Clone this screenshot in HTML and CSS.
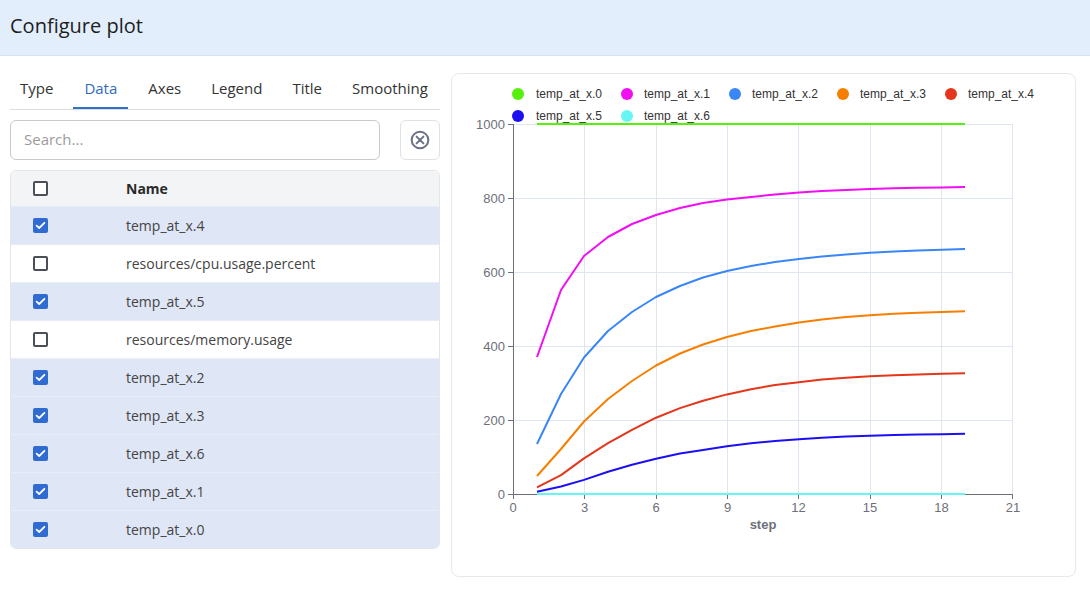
FILE: index.html
```html
<!DOCTYPE html>
<html>
<head>
<meta charset="utf-8">
<link rel="stylesheet" href="styles.css">
</head>
<body>
<header class="topbar"><h1 class="title">Configure plot</h1></header>
<main class="layout">
  <section class="panel">
    <nav class="tabs">
      <span class="tab">Type</span>
      <span class="tab active">Data</span>
      <span class="tab">Axes</span>
      <span class="tab">Legend</span>
      <span class="tab">Title</span>
      <span class="tab">Smoothing</span>
    </nav>
    <div class="search-row">
      <input class="search" type="text" placeholder="Search...">
      <button class="clear-btn" type="button">
        <svg width="22" height="22" viewBox="0 0 22 22"><circle cx="11" cy="11" r="8.3" fill="none" stroke="#6b7086" stroke-width="2"/><path d="M7.6 7.6 L14.4 14.4 M14.4 7.6 L7.6 14.4" stroke="#6b7086" stroke-width="2" stroke-linecap="round"/></svg>
      </button>
    </div>
    <div class="table">
      <div class="row head"><div class="cell-check"><span class="cb"></span></div><div class="cell-name">Name</div></div>
      <div class="row sel"><div class="cell-check"><span class="cb on"><svg viewBox="0 0 15 15"><path d="M3.6 7.6 L6.2 10 L11.4 4.8" fill="none" stroke="#fff" stroke-width="1.8" stroke-linecap="round" stroke-linejoin="round"/></svg></span></div><div class="cell-name">temp_at_x.4</div></div>
      <div class="row"><div class="cell-check"><span class="cb"></span></div><div class="cell-name">resources/cpu.usage.percent</div></div>
      <div class="row sel"><div class="cell-check"><span class="cb on"><svg viewBox="0 0 15 15"><path d="M3.6 7.6 L6.2 10 L11.4 4.8" fill="none" stroke="#fff" stroke-width="1.8" stroke-linecap="round" stroke-linejoin="round"/></svg></span></div><div class="cell-name">temp_at_x.5</div></div>
      <div class="row"><div class="cell-check"><span class="cb"></span></div><div class="cell-name">resources/memory.usage</div></div>
      <div class="row sel"><div class="cell-check"><span class="cb on"><svg viewBox="0 0 15 15"><path d="M3.6 7.6 L6.2 10 L11.4 4.8" fill="none" stroke="#fff" stroke-width="1.8" stroke-linecap="round" stroke-linejoin="round"/></svg></span></div><div class="cell-name">temp_at_x.2</div></div>
      <div class="row sel"><div class="cell-check"><span class="cb on"><svg viewBox="0 0 15 15"><path d="M3.6 7.6 L6.2 10 L11.4 4.8" fill="none" stroke="#fff" stroke-width="1.8" stroke-linecap="round" stroke-linejoin="round"/></svg></span></div><div class="cell-name">temp_at_x.3</div></div>
      <div class="row sel"><div class="cell-check"><span class="cb on"><svg viewBox="0 0 15 15"><path d="M3.6 7.6 L6.2 10 L11.4 4.8" fill="none" stroke="#fff" stroke-width="1.8" stroke-linecap="round" stroke-linejoin="round"/></svg></span></div><div class="cell-name">temp_at_x.6</div></div>
      <div class="row sel"><div class="cell-check"><span class="cb on"><svg viewBox="0 0 15 15"><path d="M3.6 7.6 L6.2 10 L11.4 4.8" fill="none" stroke="#fff" stroke-width="1.8" stroke-linecap="round" stroke-linejoin="round"/></svg></span></div><div class="cell-name">temp_at_x.1</div></div>
      <div class="row sel"><div class="cell-check"><span class="cb on"><svg viewBox="0 0 15 15"><path d="M3.6 7.6 L6.2 10 L11.4 4.8" fill="none" stroke="#fff" stroke-width="1.8" stroke-linecap="round" stroke-linejoin="round"/></svg></span></div><div class="cell-name">temp_at_x.0</div></div>
    </div>
  </section>
  <section class="chart-card">
    <svg class="chart" width="623" height="502" viewBox="452 74 623 502">
      <g class="legend">
        <circle cx="518" cy="94" r="6" fill="#55f00c"/><text x="536" y="98">temp_at_x.0</text>
        <circle cx="627" cy="94" r="6" fill="#f00ff0"/><text x="644" y="98">temp_at_x.1</text>
        <circle cx="735" cy="94" r="6" fill="#3a86f5"/><text x="752" y="98">temp_at_x.2</text>
        <circle cx="843" cy="94" r="6" fill="#f77f00"/><text x="860" y="98">temp_at_x.3</text>
        <circle cx="951" cy="94" r="6" fill="#e3361a"/><text x="968" y="98">temp_at_x.4</text>
        <circle cx="518" cy="116" r="6" fill="#1c10f2"/><text x="536" y="120">temp_at_x.5</text>
        <circle cx="627" cy="116" r="6" fill="#66f6f6"/><text x="644" y="120">temp_at_x.6</text>
      </g>
      <g class="grid" stroke="#e0e6f1" stroke-width="1">
        <path d="M513 124.5 H1013 M513 198.5 H1013 M513 272.5 H1013 M513 346.5 H1013 M513 420.5 H1013"/>
        <path d="M584.5 124 V494 M656.5 124 V494 M727.5 124 V494 M798.5 124 V494 M870.5 124 V494 M941.5 124 V494 M1012.5 124 V494"/>
      </g>
      <g class="axes" stroke="#6e7079" stroke-width="1">
        <path d="M513.5 124 V494.5 M513 494.5 H1013"/>
        <path d="M508 124.5 H513 M508 198.5 H513 M508 272.5 H513 M508 346.5 H513 M508 420.5 H513 M508 494.5 H513"/>
        <path d="M513.5 494 V499 M584.5 494 V499 M656.5 494 V499 M727.5 494 V499 M798.5 494 V499 M870.5 494 V499 M941.5 494 V499 M1012.5 494 V499"/>
      </g>
      <g class="ylabels">
        <text x="505" y="129">1000</text>
        <text x="505" y="203">800</text>
        <text x="505" y="277">600</text>
        <text x="505" y="351">400</text>
        <text x="505" y="425">200</text>
        <text x="505" y="499">0</text>
      </g>
      <g class="xlabels">
        <text x="513" y="512">0</text>
        <text x="584.5" y="512">3</text>
        <text x="656" y="512">6</text>
        <text x="727.5" y="512">9</text>
        <text x="798.5" y="512">12</text>
        <text x="870" y="512">15</text>
        <text x="941.5" y="512">18</text>
        <text x="1013" y="512">21</text>
      </g>
      <text class="xname" x="763" y="529">step</text>
      <g class="series" fill="none" stroke-width="2" stroke-linejoin="round">
        <path d="M537 124 H965" stroke="#55f00c"/>
        <polyline stroke="#f00ff0" points="537,357 561,290 584,256 608,237 632,224 656,215 680,208 703,203 727,199.5 751,197 775,194.5 799,192.5 822,191 846,190 870,189 894,188.3 918,187.8 942,187.4 965,187"/>
        <polyline stroke="#3a86f5" points="537,444 561,394 584,357.5 608,331 632,312 656,297 680,286 703,277.5 727,271 751,266 775,262 799,259 822,256.5 846,254.5 870,252.8 894,251.5 918,250.5 942,249.7 965,249"/>
        <polyline stroke="#f77f00" points="537,476 561,449 584,421.5 608,399 632,381 656,365.5 680,353.5 703,344.5 727,337 751,331 775,326.5 799,322.5 822,319.5 846,317 870,315.2 894,313.8 918,312.8 942,312 965,311.3"/>
        <polyline stroke="#e3361a" points="537,487.3 561,475.1 584,458.4 608,443.2 632,429.9 656,417.7 680,408.1 703,400.7 727,394.4 751,389.2 775,385.1 799,382.2 822,379.6 846,377.7 870,376.3 894,375.2 918,374.4 942,373.7 965,373.3"/>
        <polyline stroke="#1c10f2" points="537,491.7 561,486.5 584,479.9 608,471.7 632,464.7 656,458.8 680,453.6 703,449.9 727,446.2 751,443.2 775,441 799,439.2 822,437.7 846,436.6 870,435.8 894,435.1 918,434.5 942,434.2 965,433.8"/>
        <path d="M537 494 H965" stroke="#66f6f6"/>
      </g>
    </svg>
  </section>
</main>
</body>
</html>
```
FILE: styles.css
```css
* { box-sizing: border-box; }
html, body { margin: 0; padding: 0; background: #fff; }
body { font-family: "Open Sans", "Noto Sans", sans-serif; color: #333; width: 1090px; height: 591px; overflow: hidden; }

.topbar {
  height: 56px;
  background: #e2eefb;
  border-bottom: 1px solid #d6e2ef;
  display: flex;
  align-items: center;
  padding: 0 10px 4px;
}
.title { margin: 0; font-size: 20px; font-weight: 400; color: #1d1d1d; }

.layout { display: flex; gap: 11px; padding: 17px 0 0 10px; }

.panel { width: 430px; display: flex; flex-direction: column; }

.tabs { display: flex; gap: 10px; border-bottom: 1px solid #dcdcdc; }
.tab {
  font-size: 15px; line-height: 20px; color: #333;
  padding: 5px 10px 9px;
  border-bottom: 2px solid transparent;
}
.tab.active { color: #2f6bc4; border-bottom-color: #3370cc; font-weight: 500; padding: 5px 11px 9px; }

.search-row { display: flex; gap: 20px; margin-top: 10px; }
.search {
  width: 370px; height: 40px;
  border: 1px solid #c9c9c9; border-radius: 6px;
  padding: 0 13px 2px;
  font: 15px "Open Sans", sans-serif; color: #333;
  outline: none;
}
.search::placeholder { color: #9b9b9b; }
.clear-btn {
  width: 40px; height: 40px; padding: 0;
  border: 1px solid #dfe1e5; border-radius: 6px; background: #fff;
  display: flex; align-items: center; justify-content: center;
}
.clear-btn svg { display: block; }

.table {
  margin-top: 10px;
  border: 1px solid #e2e5ea; border-radius: 6px; overflow: hidden;
}
.row {
  display: flex; align-items: center; height: 38px;
  border-top: 1px solid #e8ebf2;
  font-size: 14px; color: #444;
  background: #fff;
}
.row.head { height: 35px; border-top: none; background: #f3f4f6; font-weight: 700; color: #2a2a2a; padding-bottom: 1px; }
.row.sel { background: #dfe6f5; border-top-color: #e8edf8; }
.cell-check { width: 115px; padding-left: 22px; display: flex; align-items: center; }
.cell-name { flex: 1; }

.cb {
  width: 15px; height: 15px; border: 2px solid #4b5058; border-radius: 2px;
  display: block; background: #fff;
}
.cb.on { border: none; background: #2f6bd0; border-radius: 2px; }
.cb.on svg { display: block; width: 15px; height: 15px; }

.chart-card {
  width: 625px; height: 504px;
  border: 1px solid #e6e8eb; border-radius: 8px;
}
.chart { display: block; }
.chart text { font-family: "Liberation Sans", Arial, sans-serif; }
.legend text { font-size: 12px; fill: #333; }
.ylabels text { font-size: 13px; fill: #6e7079; text-anchor: end; }
.xlabels text { font-size: 13px; fill: #6e7079; text-anchor: middle; }
.xname { font-size: 13px; font-weight: 700; fill: #6e7079; text-anchor: middle; }
```
